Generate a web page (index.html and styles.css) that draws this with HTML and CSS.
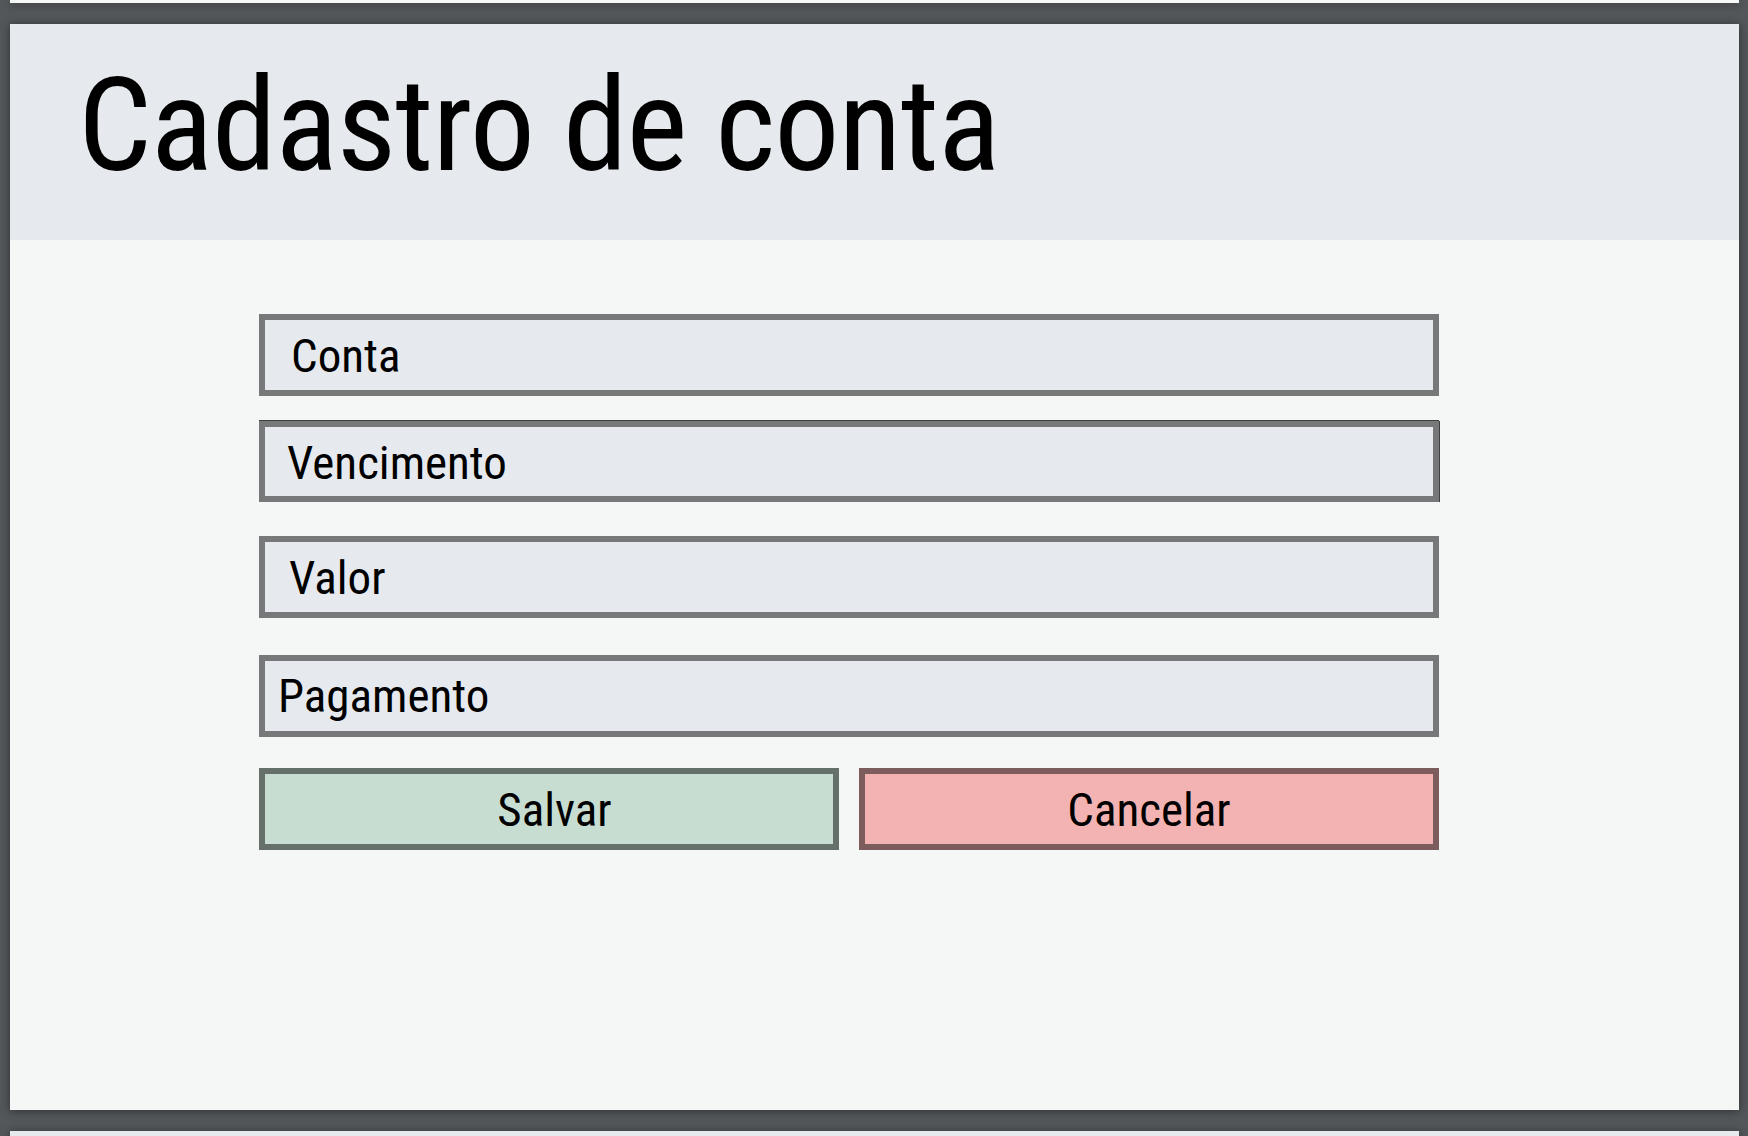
FILE: index.html
```html
<!DOCTYPE html>
<html lang="pt-BR">
<head>
<meta charset="utf-8">
<title>Cadastro de conta</title>
<link rel="stylesheet" href="styles.css">
</head>
<body>
<div class="stack">
  <div class="sheet sheet--prev"></div>
  <main class="sheet sheet--main">
    <header class="sheet-header">
      <h1 class="title">Cadastro de conta</h1>
    </header>
    <section class="form">
      <div class="field field--conta">Conta</div>
      <div class="field field--venc">Vencimento</div>
      <div class="field field--valor">Valor</div>
      <div class="field field--pag">Pagamento</div>
      <div class="actions">
        <div class="btn btn--save">Salvar</div>
        <div class="btn btn--cancel">Cancelar</div>
      </div>
    </section>
  </main>
  <div class="sheet sheet--next"></div>
</div>
</body>
</html>
```

FILE: styles.css
```css
html, body {
  margin: 0;
  padding: 0;
  height: 1136px;
  overflow: hidden;
}
body {
  background: #53575a;
  font-family: "Roboto Condensed", Roboto, "Liberation Sans", sans-serif;
  font-stretch: 75%;
  color: #000;
}
.stack {
  display: flex;
  flex-direction: column;
  gap: 21px;
  padding: 0 9px 0 10px;
}
.sheet {
  box-shadow: 0 1px 9px rgba(0, 0, 0, 0.45);
}
.sheet--prev {
  height: 3px;
  background: #f7f8f8;
}
.sheet--main {
  height: 1086px;
  background: #f5f7f6;
  display: flex;
  flex-direction: column;
}
.sheet--next {
  height: 40px;
  background: #e6eaee;
}
.sheet-header {
  height: 216px;
  background: #e6eaee;
  box-sizing: border-box;
  padding: 27px 0 0 68px;
}
.title {
  margin: 0;
  font-size: 130px;
  font-weight: 400;
  line-height: 150px;
  letter-spacing: -1px;
}
.form {
  width: 1180px;
  margin-left: 249px;
  padding-top: 74px;
  display: flex;
  flex-direction: column;
}
.field {
  height: 82px;
  box-sizing: border-box;
  border: 6px solid #76787a;
  background: #e6eaee;
  font-size: 47px;
  line-height: 72px;
  white-space: nowrap;
}
.field--conta { padding-left: 26px; }
.field--venc {
  margin-top: 25px;
  height: 81px;
  padding-left: 22px;
  box-shadow: 0 -1px 0 #3d3f41, 1px 0 0 #3d3f41;
}
.field--valor { margin-top: 34px; padding-left: 24px; }
.field--pag { margin-top: 37px; padding-left: 13px; line-height: 70px; }
.actions {
  margin-top: 31px;
  display: grid;
  grid-template-columns: 1fr 1fr;
  gap: 20px;
}
.btn {
  min-width: 0;
  height: 82px;
  box-sizing: border-box;
  border: 6px solid;
  font-size: 47px;
  line-height: 72px;
  text-align: center;
}
.btn--save {
  background: #c8ddd2;
  border-color: #66706a;
  padding-left: 11px;
}
.btn--cancel {
  background: #f4b3b3;
  border-color: #7c5c5c;
}
```
